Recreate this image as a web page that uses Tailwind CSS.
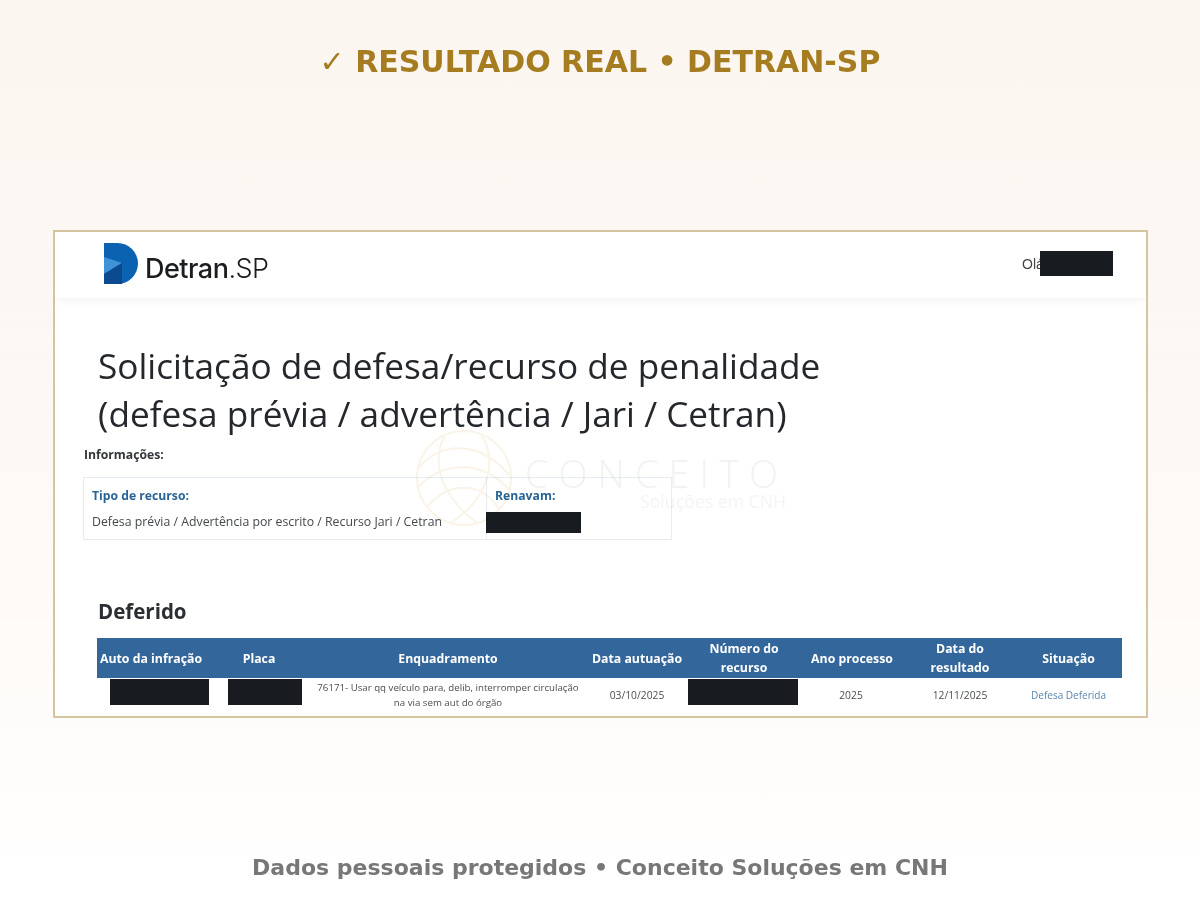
<!DOCTYPE html>
<html lang="pt-BR">
<head>
  <meta charset="UTF-8" />
  <meta name="viewport" content="width=device-width, initial-scale=1.0" />
  <title>Resultado real - Detran-SP</title>
  <script src="https://cdn.jsdelivr.net/npm/@tailwindcss/browser@4"></script>
</head>
<body class="bg-white">
  <main class="h-[900px] overflow-hidden bg-linear-to-b from-[#fbf6f0] via-[#fdf8f3] to-white font-['DejaVu_Sans',sans-serif]">

    <!-- Title -->
    <h1 class="h-[123px] flex items-center justify-center text-[30px] font-bold text-[#a67c20]">✓ RESULTADO REAL • DETRAN-SP</h1>

    <!-- Screenshot card -->
    <section class="relative mt-[107px] mx-[53px] w-[1095px] h-[488px] border-2 border-[#d4c5a0] bg-white overflow-hidden font-['Open_Sans',sans-serif]">

      <!-- Portal header -->
      <header class="relative h-[66px] pl-[49px] pr-[33px] flex items-center justify-between shadow-[0_2px_8px_rgba(0,0,0,0.06)]">
        <div class="flex items-center gap-[7px] -mt-[4px]">
          <svg width="34" height="41" viewBox="0 0 34 41">
            <path d="M0 0H13.5A20.5 20.5 0 0 1 13.5 41H0Z" fill="#0a62b0" />
            <path d="M0 14L18 20L0 31Z" fill="#3f92d8" />
            <path d="M0 31L18 20V41H0Z" fill="#0b4a8f" />
          </svg>
          <span class="mt-[11px] text-[27px] leading-none tracking-[-0.5px] text-[#1b1d20] font-['Inter',sans-serif] font-medium">Detran<span class="font-light">.SP</span></span>
        </div>
        <div class="relative w-[91px] h-[24px] -mt-[4px] text-[14px] leading-[26px] text-[#444] font-['Liberation_Sans',sans-serif]">
          Olá
          <div class="absolute right-0 top-0 w-[73px] h-[25px] bg-[#181b20]"></div>
        </div>
      </header>

      <!-- Page heading -->
      <h2 class="mt-[43px] ml-[43px] text-[35.2px] leading-[48px] text-[#24272b]">Solicitação de defesa/recurso de penalidade<br />(defesa prévia / advertência / Jari / Cetran)</h2>

      <!-- Informações -->
      <p class="mt-[8px] ml-[29px] text-[12.2px] leading-[20px] font-bold text-[#33373b]">Informações:</p>
      <div class="mt-[12px] ml-[28px] w-[589px] h-[63px] flex border border-[#e6ecf1]">
        <div class="w-[403px] pl-[8px] pt-[8px] border-r border-[#e6ecf1]">
          <p class="text-[12.2px] leading-[20px] font-bold text-[#2a6496]">Tipo de recurso:</p>
          <p class="mt-[6px] text-[12.3px] leading-[20px] text-[#44484c]">Defesa prévia / Advertência por escrito / Recurso Jari / Cetran</p>
        </div>
        <div class="pt-[8px]">
          <p class="pl-[8px] text-[12.2px] leading-[20px] font-bold text-[#2a6496]">Renavam:</p>
          <div class="mt-[6px] -ml-[1px] w-[95px] h-[21px] bg-[#181b20]"></div>
        </div>
      </div>

      <!-- Resultado -->
      <h3 class="mt-[58px] ml-[43px] text-[20.5px] leading-[26px] font-bold text-[#2b2e32]">Deferido</h3>
      <div class="mt-[14px] ml-[42px] w-[1025px]">
        <div class="grid grid-cols-[108px_108px_270px_108px_106px_108px_110px_107px] h-[40px] items-center text-center bg-[#33669a] text-white text-[12.3px] leading-[19px] font-bold">
          <div>Auto da infração</div>
          <div>Placa</div>
          <div>Enquadramento</div>
          <div>Data autuação</div>
          <div>Número do<br />recurso</div>
          <div class="pl-[2px]">Ano processo</div>
          <div>Data do<br />resultado</div>
          <div>Situação</div>
        </div>
        <div class="grid grid-cols-[108px_108px_270px_108px_106px_108px_110px_107px] pt-[1px] items-center text-center text-[#4a4e52] text-[10.3px] leading-[14px]">
          <div class="ml-[13px] w-[99px] h-[26px] self-start bg-[#181b20]"></div>
          <div class="ml-[23px] w-[74px] h-[26px] self-start bg-[#181b20]"></div>
          <div class="pt-[1px] text-[9.7px] leading-[15px]">76171- Usar qq veículo para, delib, interromper circulação<br />na via sem aut do órgão</div>
          <div class="pt-[1px]">03/10/2025</div>
          <div class="-ml-[3px] w-[110px] h-[26px] self-start bg-[#181b20]"></div>
          <div class="pt-[1px]">2025</div>
          <div class="pt-[1px]">12/11/2025</div>
          <div class="pt-[1px] text-[10px] text-[#5a86ad]">Defesa Deferida</div>
        </div>
      </div>

      <!-- Watermark -->
      <div class="absolute left-[360px] top-[197px] w-[375px] h-[100px] pointer-events-none mix-blend-multiply">
        <svg class="absolute left-0 top-0" width="98" height="98" viewBox="0 0 98 98" fill="none" stroke="#faf4e8" stroke-width="2">
          <circle cx="49" cy="49" r="47" />
          <path d="M4 38C30 10 68 14 94 46" />
          <path d="M3 58C30 30 70 32 95 62" />
          <path d="M12 78C34 52 66 52 84 80" />
          <path d="M30 6C14 36 30 70 62 94" />
          <path d="M66 5C84 34 72 70 36 94" />
        </svg>
        <span class="absolute left-[110px] top-[30px] text-[38px] font-light leading-[28px] tracking-[10px] text-[#f1f2f3]">CONCEITO</span>
        <span class="absolute left-[225px] top-[63px] text-[17.7px] leading-[18px] text-[#f3f4f5]">Soluções em CNH</span>
      </div>
    </section>

    <!-- Footer note -->
    <p class="mt-[138px] text-center text-[22px] leading-[24px] font-bold text-[#777777]">Dados pessoais protegidos • Conceito Soluções em CNH</p>
  </main>
</body>
</html>
